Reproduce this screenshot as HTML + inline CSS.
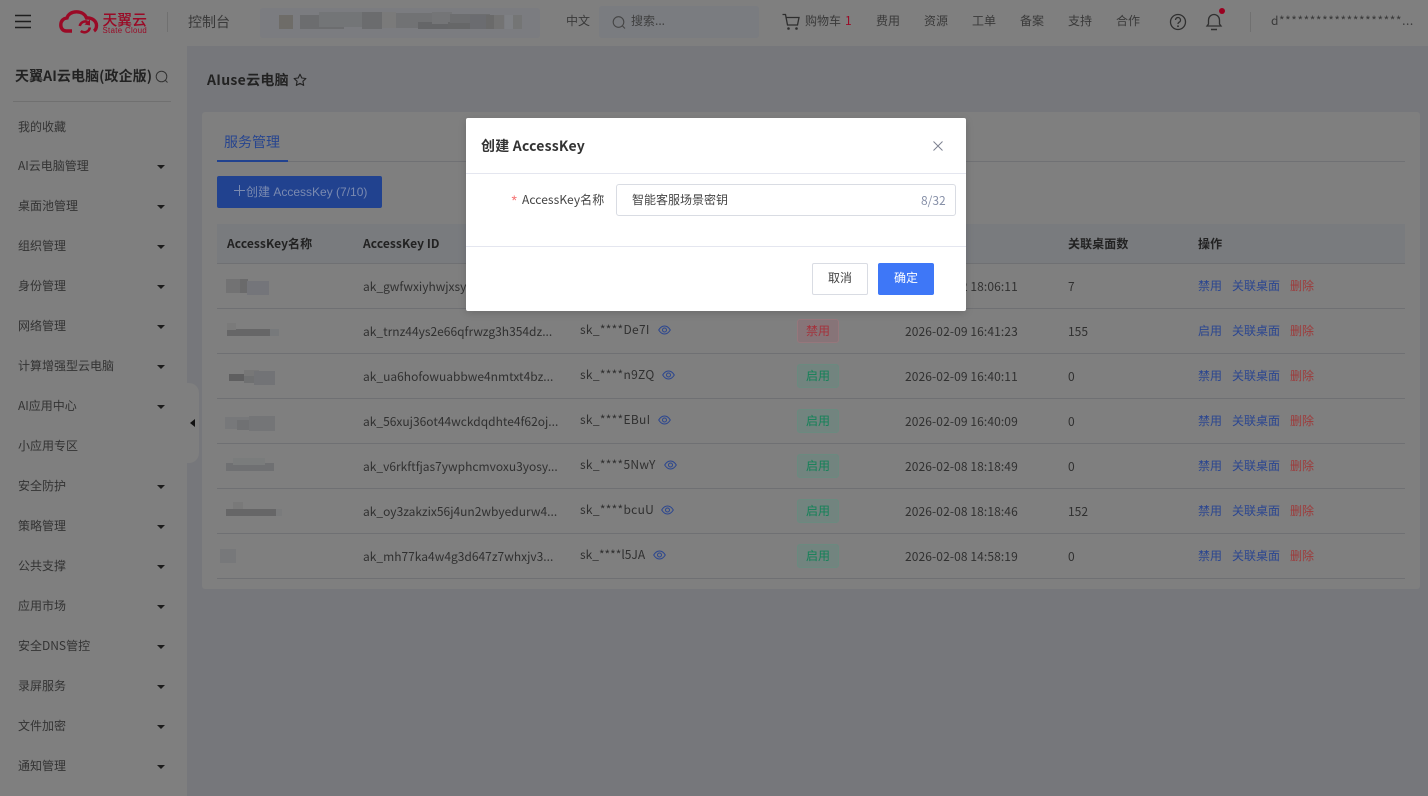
<!DOCTYPE html>
<html lang="zh-CN"><head><meta charset="utf-8"><title>AIuse云电脑</title>
<style>
*{box-sizing:border-box}
html,body{margin:0;padding:0}
body{width:1428px;height:796px;overflow:hidden;position:relative;background:#76777b;font-family:"Noto Sans CJK SC","Liberation Sans",sans-serif;font-size:12px;color:#333}
.a{position:absolute;white-space:nowrap;line-height:18px}
.b{position:absolute}
.nav{color:#3a3a3a}
.side{left:18px;color:#333;margin-top:1px}
.arr{position:absolute;left:157px;width:0;height:0;border-left:4px solid transparent;border-right:4px solid transparent;border-top:4px solid #1c1c1c;margin-top:1px}
.th{font-weight:700;color:#222;top:235px;letter-spacing:.08px}
.td{color:#303030;margin-top:1px}
.tm{letter-spacing:.1px}
.sk{color:#303030;letter-spacing:.3px}
.ln{position:absolute;left:217px;width:1188px;height:1px;background:#6f7073}
.l{color:#2b4690;margin-top:1px}.r{color:#9e3a3a;margin-top:1px}
.tag{position:absolute;left:797px;width:42px;height:24px;border-radius:3px;text-align:center;line-height:22px;font-size:12px}
.on{background:#72847f;border:1px solid #6a8a7f;color:#148258}
.off{background:#877478;border:1px solid #96777c;color:#a4323c}
.m{position:absolute;background:#6a6a6a}
</style></head><body>
<!-- header -->
<div class="b" style="left:0;top:0;width:1428px;height:46px;background:#7f7f7f"></div>
<svg class="b" style="left:15px;top:14px" width="17" height="15" viewBox="0 0 17 15"><path d="M0 1.500H16M0 7.500H16M0 13.500H16" stroke="#1e1e1e" stroke-width="1.400" fill="none"/></svg>
<svg class="b" style="left:56px;top:6px" width="46" height="30" viewBox="56 6 46 30"><path d="M72 31H66.500C62.500 31 60.800 28 60.800 25C60.800 21 63 18.500 67 18C68 14 72 11.800 76.500 11.800C81 11.800 85 14 86.500 18C92 17.500 96.500 21 96.500 25.500C96.500 28 95.500 30 94 31" fill="none" stroke="#9a0a26" stroke-width="3.400"/><path d="M79.800 26A5.500 5.500 0 0 1 87.500 22M89.800 27.500A5.500 5.500 0 0 1 80.800 31" fill="none" stroke="#9a0a26" stroke-width="2.600"/><path d="M84.500 24.500L90 19.500V25.500Z" fill="#9a0a26"/></svg>
<div class="a" style="left:102.500px;top:10.500px;font-size:14.800px;line-height:18px;color:#9a0a26;font-weight:500">天翼云</div>
<div class="a" style="left:102.500px;top:26px;font-size:7.800px;line-height:10px;color:#9a0a26;font-family:'Liberation Sans',sans-serif;letter-spacing:.35px">State Cloud</div>
<div class="b" style="left:167px;top:12px;width:1px;height:20px;background:#707070"></div>
<div class="a" style="left:188px;top:12px;font-size:14px;line-height:20px;color:#3a3a3a">控制台</div>
<div class="b" style="left:260px;top:8px;width:280px;height:30px;background:#7b7c80;border-radius:3px"></div>
<div class="b" style="left:279px;top:15px;width:14px;height:14px;background:#6e6c68"></div>
<div class="b" style="left:300px;top:15px;width:44px;height:14px;background:#6c6d6f"></div>
<div class="b" style="left:319px;top:12px;width:50px;height:15px;background:#737577"></div>
<div class="b" style="left:362px;top:12px;width:20px;height:17px;background:#6b6c6e"></div>
<div class="b" style="left:382px;top:12px;width:14px;height:16px;background:#7a7a7a"></div>
<div class="b" style="left:396px;top:13px;width:36px;height:15px;background:#717274"></div>
<div class="b" style="left:418px;top:22px;width:30px;height:7px;background:#656668"></div>
<div class="b" style="left:432px;top:12px;width:20px;height:12px;background:#747577"></div>
<div class="b" style="left:448px;top:22px;width:22px;height:7px;background:#666768"></div>
<div class="b" style="left:450px;top:14px;width:40px;height:9px;background:#6d6e70"></div>
<div class="b" style="left:470px;top:15px;width:16px;height:14px;background:#6b6c70"></div>
<div class="b" style="left:486px;top:15px;width:14px;height:14px;background:#6a6a6a"></div>
<div class="b" style="left:494px;top:15px;width:10px;height:14px;background:#737373"></div>
<div class="b" style="left:505px;top:15px;width:8px;height:14px;background:#7e8084"></div>
<div class="b" style="left:513px;top:15px;width:9px;height:14px;background:#747575"></div>
<div class="a nav" style="left:566px;top:12px">中文</div>
<div class="b" style="left:599px;top:6px;width:160px;height:32px;background:#7a7c80;border-radius:3px"></div>
<svg class="b" style="left:612px;top:15px" width="14" height="15" viewBox="0 0 14 15"><circle cx="6.500" cy="7" r="5.300" fill="none" stroke="#454545" stroke-width="1.100"/><path d="M10.500 11L13 13.500" stroke="#454545" stroke-width="1.100"/></svg>
<div class="a" style="left:631px;top:12px;color:#3f3f3f">搜索...</div>
<svg class="b" style="left:782px;top:13px" width="18" height="18" viewBox="0 0 18 18"><path d="M.5 1.500H3.500L5.500 12H15.500L17 4.500H4.200" fill="none" stroke="#2e2e2e" stroke-width="1.300"/><circle cx="6.500" cy="15.500" r="1.300" fill="#2e2e2e"/><circle cx="14.500" cy="15.500" r="1.300" fill="#2e2e2e"/></svg>
<div class="a nav" style="left:805px;top:12px">购物车</div>
<div class="a" style="left:845px;top:12px;color:#9a0a26">1</div>
<div class="a nav" style="left:876px;top:12px">费用</div>
<div class="a nav" style="left:924px;top:12px">资源</div>
<div class="a nav" style="left:972px;top:12px">工单</div>
<div class="a nav" style="left:1020px;top:12px">备案</div>
<div class="a nav" style="left:1068px;top:12px">支持</div>
<div class="a nav" style="left:1116px;top:12px">合作</div>
<svg class="b" style="left:1169px;top:13px" width="18" height="18" viewBox="0 0 18 18"><circle cx="9" cy="9" r="7.500" fill="none" stroke="#303030" stroke-width="1.300"/><path d="M6.500 7A2.500 2.500 0 1 1 9.800 9.400C9.200 9.700 9 10 9 11" fill="none" stroke="#303030" stroke-width="1.300"/><circle cx="9" cy="13.200" r=".9" fill="#303030"/></svg>
<svg class="b" style="left:1205px;top:12px" width="18" height="19" viewBox="0 0 18 19"><path d="M2 14H16L14.500 12V8A5.500 5.500 0 0 0 3.500 8V12Z" fill="none" stroke="#303030" stroke-width="1.300"/><path d="M6 17.500H12" stroke="#303030" stroke-width="1.500"/></svg>
<div class="b" style="left:1219px;top:8px;width:6px;height:6px;border-radius:50%;background:#9a0020"></div>
<div class="b" style="left:1250px;top:12px;width:1px;height:20px;background:#707070"></div>
<div class="a nav" style="left:1271px;top:12px;letter-spacing:.55px">d********************...</div>
<!-- sidebar -->
<div class="b" style="left:0;top:46px;width:187px;height:750px;background:#7f7f7f"></div>
<div class="a" style="left:15px;top:66px;font-size:14px;line-height:20px;font-weight:700;color:#222;letter-spacing:.08px">天翼AI云电脑(政企版)</div>
<svg class="b" style="left:155px;top:70px" width="14" height="14" viewBox="0 0 14 14"><circle cx="6.500" cy="6.500" r="5.300" fill="none" stroke="#333" stroke-width="1"/><path d="M10.300 10.300L12.500 12.500" stroke="#333" stroke-width="1"/></svg>
<div class="b" style="left:13px;top:101px;width:158px;height:1px;background:#707070"></div>
<div class="a side" style="top:117px">我的收藏</div>
<div class="a side" style="top:156px">AI云电脑管理</div><div class="arr" style="top:164px"></div>
<div class="a side" style="top:196px">桌面池管理</div><div class="arr" style="top:204px"></div>
<div class="a side" style="top:236px">组织管理</div><div class="arr" style="top:244px"></div>
<div class="a side" style="top:276px">身份管理</div><div class="arr" style="top:284px"></div>
<div class="a side" style="top:316px">网络管理</div><div class="arr" style="top:324px"></div>
<div class="a side" style="top:356px">计算增强型云电脑</div><div class="arr" style="top:364px"></div>
<div class="a side" style="top:396px">AI应用中心</div><div class="arr" style="top:404px"></div>
<div class="a side" style="top:436px">小应用专区</div>
<div class="a side" style="top:476px">安全防护</div><div class="arr" style="top:484px"></div>
<div class="a side" style="top:516px">策略管理</div><div class="arr" style="top:524px"></div>
<div class="a side" style="top:556px">公共支撑</div><div class="arr" style="top:564px"></div>
<div class="a side" style="top:596px">应用市场</div><div class="arr" style="top:604px"></div>
<div class="a side" style="top:636px">安全DNS管控</div><div class="arr" style="top:644px"></div>
<div class="a side" style="top:676px">录屏服务</div><div class="arr" style="top:684px"></div>
<div class="a side" style="top:716px">文件加密</div><div class="arr" style="top:724px"></div>
<div class="a side" style="top:756px">通知管理</div><div class="arr" style="top:764px"></div>
<div class="b" style="left:180px;top:383px;width:19px;height:80px;background:#7f7f7f;border-radius:0 10px 10px 0"></div>
<div class="b" style="left:190px;top:419px;width:0;height:0;border-top:4px solid transparent;border-bottom:4px solid transparent;border-right:5px solid #111"></div>
<!-- main -->
<div class="a" style="left:207px;top:70px;font-size:14px;line-height:20px;font-weight:700;color:#222;letter-spacing:.3px">AIuse云电脑</div>
<svg class="b" style="left:293px;top:73px" width="14" height="14" viewBox="0 0 14 14"><path d="M7 1.200L8.800 5L12.900 5.500L9.900 8.300L10.700 12.400L7 10.400L3.300 12.400L4.100 8.300L1.100 5.500L5.200 5Z" fill="none" stroke="#222" stroke-width="1.100" stroke-linejoin="round"/></svg>
<div class="b" style="left:202px;top:112px;width:1218px;height:477px;background:#7f7f7f;border-radius:3px"></div>
<div class="a" style="left:224px;top:132px;font-size:14px;line-height:20px;color:#27458f">服务管理</div>
<div class="b" style="left:217px;top:161px;width:1188px;height:1px;background:#707174"></div>
<div class="b" style="left:217px;top:160px;width:71px;height:2px;background:#21428f"></div>
<div class="b" style="left:217px;top:176px;width:165px;height:32px;background:#21428f;border-radius:2px"></div>
<svg class="b" style="left:234px;top:185px" width="11" height="11" viewBox="0 0 11 11"><path d="M0 5.500H11M5.500 0V11" stroke="#7a8ab0" stroke-width="1"/></svg>
<div class="a" style="left:246px;top:183px;color:#7a8ab0;font-size:12px;font-family:'Liberation Sans','Noto Sans CJK SC',sans-serif">创建 AccessKey (7/10)</div>
<div class="b" style="left:217px;top:224px;width:1188px;height:39px;background:#797b7e"></div>
<div class="a th" style="left:227px">AccessKey名称</div>
<div class="a th" style="left:363px">AccessKey ID</div>
<div class="a th" style="left:1068px">关联桌面数</div>
<div class="a th" style="left:1198px">操作</div>
<div class="ln" style="top:263px"></div><div class="ln" style="top:308px"></div><div class="ln" style="top:353px"></div><div class="ln" style="top:398px"></div><div class="ln" style="top:443px"></div><div class="ln" style="top:488px"></div><div class="ln" style="top:533px"></div><div class="ln" style="top:578px"></div>
<!-- blurred names -->
<div class="m" style="left:226px;top:279px;width:16px;height:14px;background:#727273"></div><div class="m" style="left:240px;top:279px;width:8px;height:14px;background:#6a6a6b"></div><div class="m" style="left:247px;top:281px;width:22px;height:14px;background:#74757a"></div>
<div class="m" style="left:227px;top:329px;width:43px;height:7px;background:#666667"></div><div class="m" style="left:270px;top:329px;width:9px;height:7px;background:#77797b"></div><div class="m" style="left:227px;top:323px;width:9px;height:7px;background:#7a7a7a"></div>
<div class="m" style="left:229px;top:374px;width:16px;height:7px;background:#5f5f60"></div><div class="m" style="left:244px;top:370px;width:15px;height:7px;background:#777"></div><div class="m" style="left:244px;top:376px;width:11px;height:7px;background:#6f7071"></div><div class="m" style="left:254px;top:371px;width:21px;height:14px;background:#727376"></div>
<div class="m" style="left:225px;top:417px;width:24px;height:12px;background:#77787a"></div><div class="m" style="left:237px;top:420px;width:12px;height:10px;background:#707173"></div><div class="m" style="left:249px;top:416px;width:26px;height:15px;background:#747577"></div>
<div class="m" style="left:226px;top:463px;width:48px;height:8px;background:#6f7072"></div><div class="m" style="left:233px;top:458px;width:32px;height:7px;background:#7a7c7c"></div>
<div class="m" style="left:226px;top:509px;width:50px;height:7px;background:#666667"></div><div class="m" style="left:276px;top:509px;width:6px;height:7px;background:#7a7b7c"></div><div class="m" style="left:233px;top:502px;width:10px;height:7px;background:#797979"></div>
<div class="m" style="left:220px;top:549px;width:16px;height:14px;background:#77787a"></div>
<!-- rows -->
<div class="a td" style="left:363px;top:277px">ak_gwfwxiyhwjxsyxxxxxxxxxxxx</div>
<div class="a td tm" style="left:905px;top:277px">2026-02-12 18:06:11</div><div class="a td" style="left:1068px;top:277px">7</div>
<div class="a l" style="left:1198px;top:276px">禁用</div><div class="a l" style="left:1232px;top:276px">关联桌面</div><div class="a r" style="left:1290px;top:276px">删除</div>

<div class="a td" style="left:363px;top:322px">ak_trnz44ys2e66qfrwzg3h354dz...</div>
<div class="a sk" style="left:580px;top:321px">sk_****De7I</div>
<svg class="b" style="left:658px;top:325px" width="13" height="10" viewBox="0 0 13 10"><path d="M.7 5C2.500 2 4.500 1 6.500 1S10.500 2 12.300 5C10.500 8 8.500 9 6.500 9S2.500 8 .7 5Z" fill="none" stroke="#2b4690"/><circle cx="6.500" cy="5" r="2" fill="none" stroke="#2b4690"/></svg>
<div class="tag off" style="top:319px">禁用</div>
<div class="a td tm" style="left:905px;top:322px">2026-02-09 16:41:23</div><div class="a td" style="left:1068px;top:322px">155</div>
<div class="a l" style="left:1198px;top:321px">启用</div><div class="a l" style="left:1232px;top:321px">关联桌面</div><div class="a r" style="left:1290px;top:321px">删除</div>

<div class="a td" style="left:363px;top:367px">ak_ua6hofowuabbwe4nmtxt4bz...</div>
<div class="a sk" style="left:580px;top:366px">sk_****n9ZQ</div>
<svg class="b" style="left:662px;top:370px" width="13" height="10" viewBox="0 0 13 10"><path d="M.7 5C2.500 2 4.500 1 6.500 1S10.500 2 12.300 5C10.500 8 8.500 9 6.500 9S2.500 8 .7 5Z" fill="none" stroke="#2b4690"/><circle cx="6.500" cy="5" r="2" fill="none" stroke="#2b4690"/></svg>
<div class="tag on" style="top:364px">启用</div>
<div class="a td tm" style="left:905px;top:367px">2026-02-09 16:40:11</div><div class="a td" style="left:1068px;top:367px">0</div>
<div class="a l" style="left:1198px;top:366px">禁用</div><div class="a l" style="left:1232px;top:366px">关联桌面</div><div class="a r" style="left:1290px;top:366px">删除</div>

<div class="a td" style="left:363px;top:412px">ak_56xuj36ot44wckdqdhte4f62oj...</div>
<div class="a sk" style="left:580px;top:411px">sk_****EBuI</div>
<svg class="b" style="left:658px;top:415px" width="13" height="10" viewBox="0 0 13 10"><path d="M.7 5C2.500 2 4.500 1 6.500 1S10.500 2 12.300 5C10.500 8 8.500 9 6.500 9S2.500 8 .7 5Z" fill="none" stroke="#2b4690"/><circle cx="6.500" cy="5" r="2" fill="none" stroke="#2b4690"/></svg>
<div class="tag on" style="top:409px">启用</div>
<div class="a td tm" style="left:905px;top:412px">2026-02-09 16:40:09</div><div class="a td" style="left:1068px;top:412px">0</div>
<div class="a l" style="left:1198px;top:411px">禁用</div><div class="a l" style="left:1232px;top:411px">关联桌面</div><div class="a r" style="left:1290px;top:411px">删除</div>

<div class="a td" style="left:363px;top:457px">ak_v6rkftfjas7ywphcmvoxu3yosy...</div>
<div class="a sk" style="left:580px;top:456px">sk_****5NwY</div>
<svg class="b" style="left:664px;top:460px" width="13" height="10" viewBox="0 0 13 10"><path d="M.7 5C2.500 2 4.500 1 6.500 1S10.500 2 12.300 5C10.500 8 8.500 9 6.500 9S2.500 8 .7 5Z" fill="none" stroke="#2b4690"/><circle cx="6.500" cy="5" r="2" fill="none" stroke="#2b4690"/></svg>
<div class="tag on" style="top:454px">启用</div>
<div class="a td tm" style="left:905px;top:457px">2026-02-08 18:18:49</div><div class="a td" style="left:1068px;top:457px">0</div>
<div class="a l" style="left:1198px;top:456px">禁用</div><div class="a l" style="left:1232px;top:456px">关联桌面</div><div class="a r" style="left:1290px;top:456px">删除</div>

<div class="a td" style="left:363px;top:502px">ak_oy3zakzix56j4un2wbyedurw4...</div>
<div class="a sk" style="left:580px;top:501px">sk_****bcuU</div>
<svg class="b" style="left:661px;top:505px" width="13" height="10" viewBox="0 0 13 10"><path d="M.7 5C2.500 2 4.500 1 6.500 1S10.500 2 12.300 5C10.500 8 8.500 9 6.500 9S2.500 8 .7 5Z" fill="none" stroke="#2b4690"/><circle cx="6.500" cy="5" r="2" fill="none" stroke="#2b4690"/></svg>
<div class="tag on" style="top:499px">启用</div>
<div class="a td tm" style="left:905px;top:502px">2026-02-08 18:18:46</div><div class="a td" style="left:1068px;top:502px">152</div>
<div class="a l" style="left:1198px;top:501px">禁用</div><div class="a l" style="left:1232px;top:501px">关联桌面</div><div class="a r" style="left:1290px;top:501px">删除</div>

<div class="a td" style="left:363px;top:547px">ak_mh77ka4w4g3d647z7whxjv3...</div>
<div class="a sk" style="left:580px;top:546px;letter-spacing:0">sk_****l5JA</div>
<svg class="b" style="left:653px;top:550px" width="13" height="10" viewBox="0 0 13 10"><path d="M.7 5C2.500 2 4.500 1 6.500 1S10.500 2 12.300 5C10.500 8 8.500 9 6.500 9S2.500 8 .7 5Z" fill="none" stroke="#2b4690"/><circle cx="6.500" cy="5" r="2" fill="none" stroke="#2b4690"/></svg>
<div class="tag on" style="top:544px">启用</div>
<div class="a td tm" style="left:905px;top:547px">2026-02-08 14:58:19</div><div class="a td" style="left:1068px;top:547px">0</div>
<div class="a l" style="left:1198px;top:546px">禁用</div><div class="a l" style="left:1232px;top:546px">关联桌面</div><div class="a r" style="left:1290px;top:546px">删除</div>
<!-- modal -->
<div class="b" style="left:466px;top:118px;width:500px;height:193px;background:#fff;border-radius:2px;box-shadow:0 2px 8px rgba(0,0,0,.15)"></div>
<div class="a" style="left:481px;top:136px;font-size:14px;line-height:20px;font-weight:700;color:#333;letter-spacing:.2px">创建 AccessKey</div>
<svg class="b" style="left:933px;top:141px" width="10" height="10" viewBox="0 0 10 10"><path d="M.5.5L9.500 9.500M9.500.5L.5 9.500" stroke="#7d8290" stroke-width="1" fill="none"/></svg>
<div class="b" style="left:466px;top:173px;width:500px;height:1px;background:#e4e6ef"></div>
<div class="a" style="left:511.500px;top:191px;color:#f56c6c;font-size:14px;font-family:'Liberation Sans',sans-serif">*</div>
<div class="a" style="left:522px;top:191px;color:#444;letter-spacing:.08px">AccessKey名称</div>
<div class="b" style="left:616px;top:184px;width:340px;height:32px;border:1px solid #d9dce3;border-radius:3px;background:#fff"></div>
<div class="a" style="left:632px;top:191px;color:#444">智能客服场景密钥</div>
<div class="a" style="left:921px;top:192px;color:#8790a8">8/32</div>
<div class="b" style="left:466px;top:246px;width:500px;height:1px;background:#e4e6ef"></div>
<div class="b" style="left:812px;top:263px;width:56px;height:32px;border:1px solid #d9dce3;border-radius:2px;background:#fff;text-align:center;line-height:28px;color:#444">取消</div>
<div class="b" style="left:878px;top:263px;width:56px;height:32px;border-radius:2px;background:#3e77f7;text-align:center;line-height:30px;color:#fff">确定</div>
</body></html>
